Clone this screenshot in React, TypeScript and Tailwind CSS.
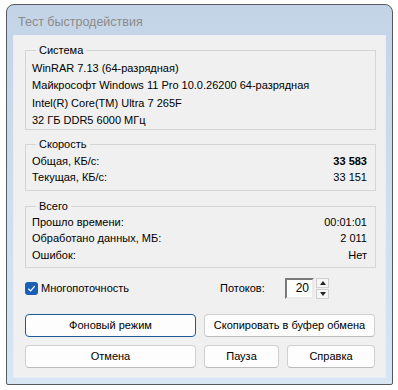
import React from 'react';

const font = { fontFamily: '"Liberation Sans", "DejaVu Sans", sans-serif' };

type Row = [string, string?, boolean?];

const Group = ({ title, rows, rowH, body }: { title: string; rows: Row[]; rowH: string; body: string }) => (
  <fieldset className={`border border-[#d5d5d5] pl-[6px] pr-[8px] ${body}`}>
    <legend className="ml-[4px] px-[3px] text-[11px] leading-[15px] text-black">{title}</legend>
    {rows.map(([label, value, bold], i) => (
      <div key={i} className={`flex items-center justify-between text-[11px] text-black ${rowH}`}>
        <span>{label}</span>
        {value && <span className={bold ? 'font-bold' : ''}>{value}</span>}
      </div>
    ))}
  </fieldset>
);

const Btn = ({ children, focused, w }: { children: React.ReactNode; focused?: boolean; w: string }) => (
  <button
    className={`${w} h-[23px] rounded-[4px] bg-[#fdfdfd] text-[11px] text-black border ${
      focused ? 'border-[#1f5a92]' : 'border-[#d0d0d0] border-b-[#bcbcbc]'
    }`}
  >
    {children}
  </button>
);

export default function App() {
  return (
    <div className="w-[398px] h-[390px] bg-white pt-[4px] pl-[6px]" style={font}>
      <div className="w-[387px] h-[381px] rounded-t-[8px] rounded-b-[2px] border border-[#555a60] bg-gradient-to-b from-[#c3d4e7] via-[#cfdeee] to-[#d8e5f2] flex flex-col px-[6px] pb-[6px]">
        <div className="h-[30px] flex items-center pl-[5px] pt-[5px] text-[12.5px] text-[#8b8b8b]">
          Тест быстродействия
        </div>
        <div className="flex-1 bg-[#f0f0f0] border border-[#e6edf5] pl-[11px] pr-[9px] pt-[7px] flex flex-col">
          <Group
            title="Система"
            rowH="h-[17.5px]"
            body="pt-[1px] pb-0"
            rows={[
              ['WinRAR 7.13 (64-разрядная)'],
              ['Майкрософт Windows 11 Pro 10.0.26200 64-разрядная'],
              ['Intel(R) Core(TM) Ultra 7 265F'],
              ['32 ГБ DDR5 6000 МГц'],
            ]}
          />
          <div className="h-[7px]" />
          <Group
            title="Скорость"
            rowH="h-[16px]"
            body="pt-[1.5px] pb-[4px]"
            rows={[
              ['Общая, КБ/с:', '33 583', true],
              ['Текущая, КБ/с:', '33 151'],
            ]}
          />
          <div className="h-[8px]" />
          <Group
            title="Всего"
            rowH="h-[16.5px]"
            body="pt-0 pb-[4px]"
            rows={[
              ['Прошло времени:', '00:01:01'],
              ['Обработано данных, МБ:', '2 011'],
              ['Ошибок:', 'Нет'],
            ]}
          />
          <div className="mt-[9px] h-[22px] flex items-center text-[11px] text-black">
            <div className="w-[195px] flex items-center">
              <div className="w-[13px] h-[13px] rounded-[3px] bg-[#1a5fb4] flex items-center justify-center">
                <svg width="9" height="9" viewBox="0 0 10 10">
                  <path d="M1.5 5.2 L4 7.6 L8.6 2.4" fill="none" stroke="white" strokeWidth="1.4" />
                </svg>
              </div>
              <span className="ml-[3px]">Многопоточность</span>
            </div>
            <span className="w-[65px]">Потоков:</span>
            <div className="w-[29px] h-[21px] bg-white border-2 border-t-[#7a7a7a] border-l-[#7a7a7a] border-r-[#ebebeb] border-b-[#ebebeb] flex items-center justify-end pr-[3px] text-[12px]">
              20
            </div>
            <div className="ml-[2px] w-[13px] h-[21px] flex flex-col gap-[1px]">
              <div className="flex-1 border border-[#cfcfcf] bg-[#f6f6f6] flex items-center justify-center">
                <svg width="6" height="4" viewBox="0 0 6 4"><path d="M0 4 L3 0 L6 4 Z" fill="#222" /></svg>
              </div>
              <div className="flex-1 border border-[#cfcfcf] bg-[#f6f6f6] flex items-center justify-center">
                <svg width="6" height="4" viewBox="0 0 6 4"><path d="M0 0 L6 0 L3 4 Z" fill="#222" /></svg>
              </div>
            </div>
          </div>
          <div className="mt-[15px] flex gap-[8px]">
            <Btn w="w-[171px]" focused>Фоновый режим</Btn>
            <Btn w="w-[171px]">Скопировать в буфер обмена</Btn>
          </div>
          <div className="mt-[8px] flex gap-[8px]">
            <Btn w="w-[171px]">Отмена</Btn>
            <Btn w="w-[75px]">Пауза</Btn>
            <Btn w="w-[88px]">Справка</Btn>
          </div>
        </div>
      </div>
    </div>
  );
}
